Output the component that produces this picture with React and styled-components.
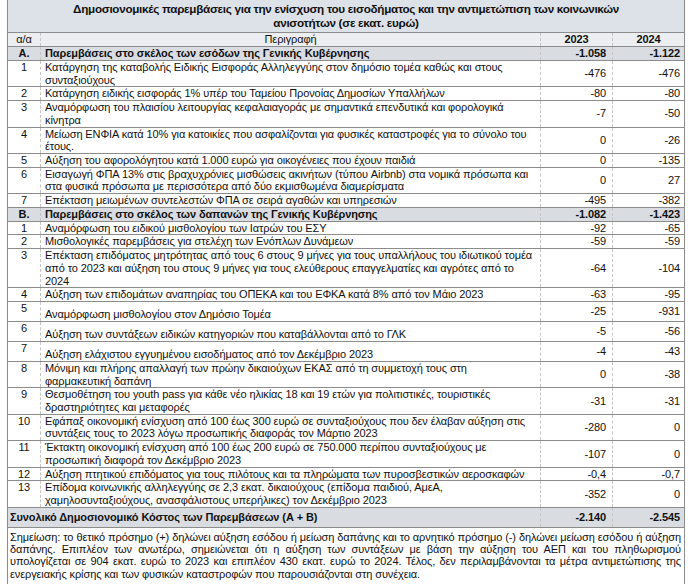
import React from "react";
import styled, { createGlobalStyle } from "styled-components";

const GlobalStyle = createGlobalStyle`
  body {
    margin: 0;
    background: #ffffff;
    font-family: "Liberation Sans", Arial, sans-serif;
    color: #111111;
  }
`;

const Page = styled.div`
  padding: 0 12px 12px 7px;
  width: 677px;
`;

const Table = styled.table`
  width: 677px;
  border-collapse: collapse;
  table-layout: fixed;
  font-size: 11px;
  line-height: 12.7px;
  letter-spacing: -0.1px;
  border-left: 1px solid #8c8c8c;
  border-right: 1px solid #8c8c8c;
`;

const TitleCell = styled.td`
  background: #dde2e8;
  font-weight: bold;
  font-size: 11.7px;
  line-height: 14px;
  letter-spacing: -0.3px;
  white-space: nowrap;
  text-align: center;
  padding: 2px 4px 2px;
  border-bottom: 1px solid #8c8c8c;
`;

const Row = styled.tr`
  background: ${(p) =>
    p.$kind === "section" || p.$kind === "total"
      ? "#d9dde2"
      : p.$kind === "head"
      ? "#eceef1"
      : "#ffffff"};
  font-weight: ${(p) => (p.$kind === "section" || p.$kind === "total" ? "bold" : "normal")};
  height: ${(p) => (p.$tall ? "20px" : p.$kind ? "14px" : "auto")};
  border-bottom: 1px solid #8c8c8c;
`;

const Cell = styled.td`
  padding: 0 ${(p) => p.$padR || 4}px 0 ${(p) => p.$padL || 4}px;
  text-align: ${(p) => p.$align || "left"};
  vertical-align: ${(p) => p.$valign || "middle"};
  border-right: 1px dashed #c4c4c4;
  &:last-child {
    border-right: none;
  }
`;

const NoteCell = styled.td`
  padding: 3px 3px 4px 2px;
  font-size: 11px;
  line-height: 12.3px;
  letter-spacing: -0.1px;
  text-align: justify;
  border-bottom: 1px dashed #b8b8b8;
  border-left: 1px dashed #b8b8b8;
`;

const NoteRow = styled.tr`
  background: #ffffff;
`;

const rowsA = [
  ["1", "Κατάργηση της καταβολής Ειδικής Εισφοράς Αλληλεγγύης στον δημόσιο τομέα καθώς και στους συνταξιούχους", "-476", "-476"],
  ["2", "Κατάργηση ειδικής εισφοράς 1% υπέρ του Ταμείου Προνοίας Δημοσίων Υπαλλήλων", "-80", "-80"],
  ["3", "Αναμόρφωση του πλαισίου λειτουργίας κεφαλαιαγοράς με σημαντικά επενδυτικά και φορολογικά κίνητρα", "-7", "-50"],
  ["4", "Μείωση ΕΝΦΙΑ κατά 10% για κατοικίες που ασφαλίζονται για φυσικές καταστροφές για το σύνολο του έτους.", "0", "-26"],
  ["5", "Αύξηση του αφορολόγητου κατά 1.000 ευρώ για οικογένειες που έχουν παιδιά", "0", "-135"],
  ["6", "Εισαγωγή ΦΠΑ 13% στις βραχυχρόνιες μισθώσεις ακινήτων (τύπου Airbnb) στα νομικά πρόσωπα και στα φυσικά πρόσωπα με περισσότερα από δύο εκμισθωμένα διαμερίσματα", "0", "27"],
  ["7", "Επέκταση μειωμένων συντελεστών ΦΠΑ σε σειρά αγαθών και υπηρεσιών", "-495", "-382"],
];

const rowsB = [
  ["1", "Αναμόρφωση του ειδικού μισθολογίου των Ιατρών του ΕΣΥ", "-92", "-65"],
  ["2", "Μισθολογικές παρεμβάσεις για στελέχη των Ενόπλων Δυνάμεων", "-59", "-59"],
  ["3", "Επέκταση επιδόματος μητρότητας από τους 6 στους 9 μήνες για τους υπαλλήλους του ιδιωτικού τομέα από το 2023 και αύξηση του στους 9 μήνες για τους ελεύθερους επαγγελματίες και αγρότες από το 2024", "-64", "-104"],
  ["4", "Αύξηση των επιδομάτων αναπηρίας του ΟΠΕΚΑ και του ΕΦΚΑ κατά 8% από τον Μάιο 2023", "-63", "-95"],
  ["5", "Αναμόρφωση μισθολογίου στον Δημόσιο Τομέα", "-25", "-931", true],
  ["6", "Αύξηση των συντάξεων ειδικών κατηγοριών που καταβάλλονται από το ΓΛΚ", "-5", "-56", true],
  ["7", "Αύξηση ελάχιστου εγγυημένου εισοδήματος από τον Δεκέμβριο 2023", "-4", "-43", true],
  ["8", <>Μόνιμη και πλήρης απαλλαγή των πρώην δικαιούχων ΕΚΑΣ από τη συμμετοχή τους στη<br />φαρμακευτική δαπάνη</>, "0", "-38"],
  ["9", "Θεσμοθέτηση του youth pass για κάθε νέο ηλικίας 18 και 19 ετών για πολιτιστικές, τουριστικές δραστηριότητες και μεταφορές", "-31", "-31"],
  ["10", "Εφάπαξ οικονομική ενίσχυση από 100 έως 300 ευρώ σε συνταξιούχους που δεν έλαβαν αύξηση στις συντάξεις τους το 2023 λόγω προσωπικής διαφοράς τον Μάρτιο 2023", "-280", "0"],
  ["11", "Έκτακτη οικονομική ενίσχυση από 100 έως 200 ευρώ σε 750.000 περίπου συνταξιούχους με προσωπική διαφορά τον Δεκέμβριο 2023", "-107", "0"],
  ["12", "Αύξηση πτητικού επιδόματος για τους πιλότους και τα πληρώματα των πυροσβεστικών αεροσκαφών", "-0,4", "-0,7"],
  ["13", "Επίδομα κοινωνικής αλληλεγγύης σε 2,3 εκατ. δικαιούχους (επίδομα παιδιού, ΑμεΑ, χαμηλοσυνταξιούχους, ανασφάλιστους υπερήλικες) τον Δεκέμβριο 2023", "-352", "0"],
];

function ItemRow({ item }) {
  const [no, text, y23, y24, tall] = item;
  return (
    <Row $tall={tall}>
      <Cell $align="center" $valign="top">{no}</Cell>
      <Cell $valign={tall ? "bottom" : "middle"}>{text}</Cell>
      <Cell $align="right" $padR={6}>{y23}</Cell>
      <Cell $align="right" $padR={4}>{y24}</Cell>
    </Row>
  );
}

function SectionRow({ label, text, y23, y24 }) {
  return (
    <Row $kind="section">
      <Cell $align="center">{label}</Cell>
      <Cell>{text}</Cell>
      <Cell $align="right" $padR={6}>{y23}</Cell>
      <Cell $align="right" $padR={4}>{y24}</Cell>
    </Row>
  );
}

export default function App() {
  return (
    <Page>
      <GlobalStyle />
      <Table>
        <colgroup>
          <col style={{ width: 33 }} />
          <col style={{ width: 500 }} />
          <col style={{ width: 72 }} />
          <col style={{ width: 72 }} />
        </colgroup>
        <tbody>
          <tr>
            <TitleCell colSpan={4}>
              Δημοσιονομικές παρεμβάσεις για την ενίσχυση του εισοδήματος και την αντιμετώπιση των κοινωνικών
              <br />
              ανισοτήτων (σε εκατ. ευρώ)
            </TitleCell>
          </tr>
          <Row $kind="head">
            <Cell $align="center">α/α</Cell>
            <Cell $align="center">Περιγραφή</Cell>
            <Cell $align="center"><b>2023</b></Cell>
            <Cell $align="center"><b>2024</b></Cell>
          </Row>
          <SectionRow label="Α." text="Παρεμβάσεις στο σκέλος των εσόδων της Γενικής Κυβέρνησης" y23="-1.058" y24="-1.122" />
          {rowsA.map((r) => (
            <ItemRow key={"a" + r[0]} item={r} />
          ))}
          <SectionRow label="Β." text="Παρεμβάσεις στο σκέλος των δαπανών της Γενικής Κυβέρνησης" y23="-1.082" y24="-1.423" />
          {rowsB.map((r) => (
            <ItemRow key={"b" + r[0]} item={r} />
          ))}
          <Row $kind="total" $tall>
            <Cell colSpan={2} $padL={2}>Συνολικό Δημοσιονομικό Κόστος των Παρεμβάσεων (Α + Β)</Cell>
            <Cell $align="right" $padR={6}>-2.140</Cell>
            <Cell $align="right" $padR={4}>-2.545</Cell>
          </Row>
          <NoteRow>
            <NoteCell colSpan={4}>
              Σημείωση: το θετικό πρόσημο (+) δηλώνει αύξηση εσόδου ή μείωση δαπάνης και το αρνητικό πρόσημο (-) δηλώνει μείωση εσόδου ή αύξηση δαπάνης. Επιπλέον των ανωτέρω, σημειώνεται ότι η αύξηση των συντάξεων με βάση την αύξηση του ΑΕΠ και του πληθωρισμού υπολογίζεται σε 904 εκατ. ευρώ το 2023 και επιπλέον 430 εκατ. ευρώ το 2024. Τέλος, δεν περιλαμβάνονται τα μέτρα αντιμετώπισης της ενεργειακής κρίσης και των φυσικών καταστροφών που παρουσιάζονται στη συνέχεια.
            </NoteCell>
          </NoteRow>
        </tbody>
      </Table>
    </Page>
  );
}
